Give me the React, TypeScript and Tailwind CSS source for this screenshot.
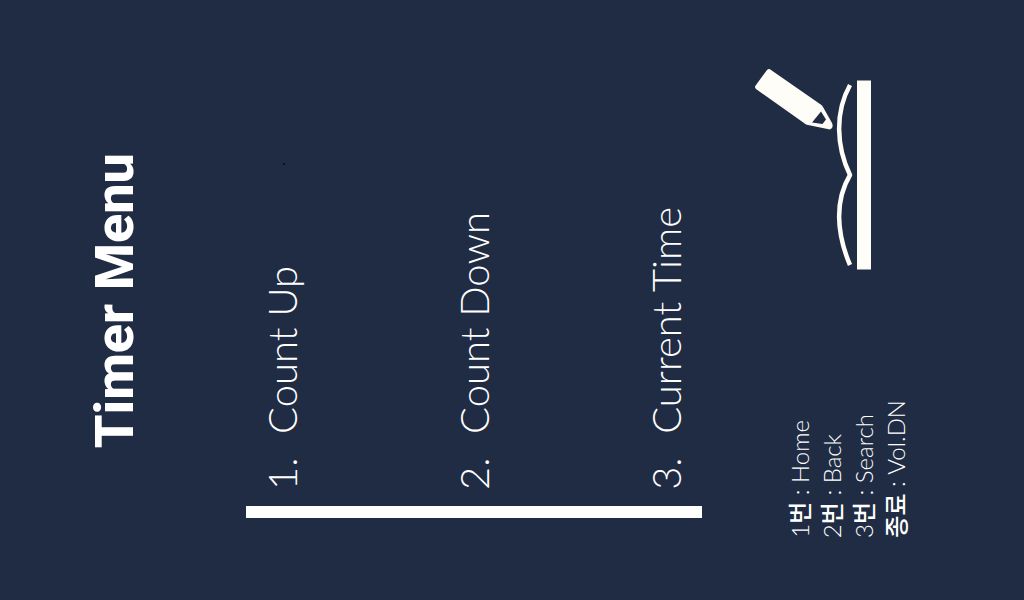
type MenuItem = { number: string; label: string };
type KeyHint = { keyNumber: string; keyName: string; action: string };

const menuItems: MenuItem[] = [
  { number: "1.", label: "Count Up" },
  { number: "2.", label: "Count Down" },
  { number: "3.", label: "Current Time" },
];

const keyHints: KeyHint[] = [
  { keyNumber: "1", keyName: "번", action: "Home" },
  { keyNumber: "2", keyName: "번", action: "Back" },
  { keyNumber: "3", keyName: "번", action: "Search" },
  { keyNumber: "", keyName: "종료", action: "Vol.DN" },
];

function BookAndPencil() {
  return (
    <svg width="120" height="204" viewBox="752 67 120 204" fill="none" aria-hidden="true">
      <path
        fill="#fffdf7"
        fillRule="evenodd"
        d="M767 70Q769 68 771 70L820 104Q822 105 823 107L832 123Q834 128 830 129.500L808 125Q806 125 804 123L756 89Q754 87 756 85ZM821 111.500L812 122.500L822.500 124L826 119.500Z"
      />
      <path
        stroke="#fffdf7"
        strokeWidth="4.500"
        strokeLinejoin="round"
        d="M850 85C835 112 836 146 850 175C835 200 836 232 850 265"
      />
      <path fill="#fffdf7" d="M857 80.500H871V269.500H857Z" />
    </svg>
  );
}

export default function App() {
  return (
    <main className="relative grid min-h-screen grid-cols-[246fr_456fr_322fr] bg-[#202c43] font-['Lato','Noto_Sans_CJK_KR',sans-serif] text-white">
      <header className="flex items-end justify-center pr-4 pb-[152px]">
        <h1 className="rotate-180 whitespace-nowrap font-['Roboto',sans-serif] text-[54px] leading-[64px] font-extrabold [writing-mode:vertical-rl]">
          Timer Menu
        </h1>
      </header>

      <section className="flex flex-col justify-end pb-[82px]">
        <ol className="flex items-end justify-between pr-3 pb-4 pl-3">
          {menuItems.map((item) => (
            <li
              key={item.number}
              className="flex rotate-180 whitespace-nowrap text-[40px] leading-[48px] font-light [writing-mode:vertical-rl]"
            >
              <span className="h-14">{item.number}</span>
              <span>{item.label}</span>
            </li>
          ))}
        </ol>
        <div className="h-3 bg-white" />
      </section>

      <aside className="flex flex-col items-start justify-between pt-[67px] pb-[62px] pl-[50px]">
        <BookAndPencil />
        <ul className="flex items-end pl-8">
          {keyHints.map((hint) => (
            <li
              key={hint.action}
              className="w-8 rotate-180 whitespace-nowrap text-[24px] leading-[32px] font-light [text-orientation:sideways] [writing-mode:vertical-rl]"
            >
              {hint.keyNumber}
              <span className="font-medium">{hint.keyName}</span>
              {" : "}
              {hint.action}
            </li>
          ))}
        </ul>
      </aside>

      <span className="absolute top-[163px] left-[283px] size-0.5 bg-[#0b101b]" aria-hidden="true" />
    </main>
  );
}
